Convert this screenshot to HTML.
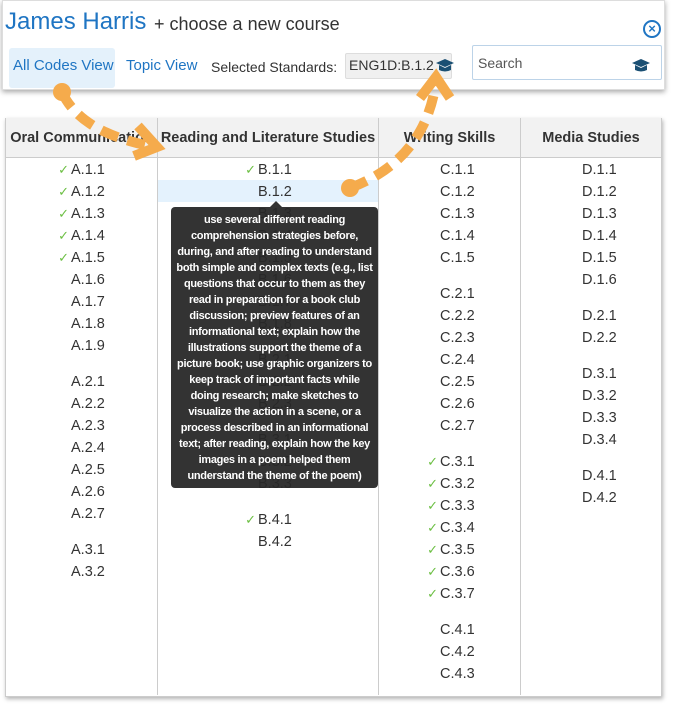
<!DOCTYPE html><html><head><meta charset="utf-8"><style>
body{margin:0;width:675px;height:706px;background:#fff;font-family:"Liberation Sans",sans-serif;position:relative;overflow:hidden;color:#333}
.a{position:absolute}
.it{position:absolute;font-size:14.5px;line-height:18px;color:#333;white-space:nowrap}
.ck{position:absolute;right:100%;margin-right:2px;color:#6cbf43;font-size:13px}
.th{position:absolute;top:118px;height:39px;line-height:40px;text-align:center;font-weight:bold;font-size:14.5px;color:#333;background:#f2f2f2;border-right:1px solid #ccc;border-bottom:1px solid #ccc;overflow:hidden;white-space:nowrap}
.vl{position:absolute;top:158px;height:537px;border-left:1px solid #ccc}
</style></head><body>
<div class="a" style="left:2px;top:0;width:661px;height:88px;border:1px solid #ddd;box-shadow:0 2px 5px rgba(0,0,0,.35);background:#fff"></div>
<div class="a" style="left:5px;top:8px;font-size:24px;color:#1f75c3">James Harris</div>
<div class="a" style="left:154px;top:14px;font-size:18px;color:#333">+ choose a new course</div>
<div class="a" style="left:643px;top:20px;width:14px;height:14px;border:2px solid #1f75c3;border-radius:50%;color:#1f75c3;font-size:13px;line-height:14px;text-align:center;font-weight:bold">×</div>
<div class="a" style="left:9px;top:48px;width:106px;height:40px;background:#e4f1fb;border-radius:3px"></div>
<div class="a" style="left:13px;top:57px;font-size:15px;color:#1f75c3">All Codes View</div>
<div class="a" style="left:126px;top:57px;font-size:15px;color:#1f75c3">Topic View</div>
<div class="a" style="left:211px;top:59px;font-size:14px;color:#333">Selected Standards:</div>
<div class="a" style="left:345px;top:53px;width:105px;height:24px;background:#f0f0f0;border:1px solid #ddd;border-radius:2px"></div>
<div class="a" style="left:349px;top:57px;font-size:14px;color:#333">ENG1D:B.1.2</div>
<div class="a" style="left:472px;top:45px;width:188px;height:33px;border:1px solid #bcd3e8;border-radius:2px;background:#fff"></div>
<div class="a" style="left:478px;top:55px;font-size:14px;color:#555">Search</div>
<svg class="a" style="left:0;top:0" width="675" height="706">
<g fill="#1a4f73"><path d="M632 63 l9 -4 9 4 -9 4z"/><path d="M635 65 v5 q6 3 12 0 v-5 l-6 3z"/>
<path d="M436 63 l9 -4 9 4 -9 4z"/><path d="M439 65 v5 q6 3 12 0 v-5 l-6 3z"/></g>
</svg>
<div class="a" style="left:5px;top:118px;width:655px;height:577px;border:1px solid #ccc;box-shadow:1px 2px 4px rgba(0,0,0,.3);background:#fff"></div>
<div class="th" style="left:6px;width:151px">Oral Communication</div>
<div class="th" style="left:158px;width:220px">Reading and Literature Studies</div>
<div class="th" style="left:379px;width:141px">Writing Skills</div>
<div class="th" style="left:521px;width:140px;border-right:none">Media Studies</div>
<div class="vl" style="left:157px"></div><div class="vl" style="left:378px"></div><div class="vl" style="left:520px"></div>
<div class="a" style="left:158px;top:180px;width:220px;height:22px;background:#e4f2fd"></div>
<div class="it" style="left:71px;top:161px"><span class="ck">✓</span>A.1.1</div>
<div class="it" style="left:71px;top:183px"><span class="ck">✓</span>A.1.2</div>
<div class="it" style="left:71px;top:205px"><span class="ck">✓</span>A.1.3</div>
<div class="it" style="left:71px;top:227px"><span class="ck">✓</span>A.1.4</div>
<div class="it" style="left:71px;top:249px"><span class="ck">✓</span>A.1.5</div>
<div class="it" style="left:71px;top:271px">A.1.6</div>
<div class="it" style="left:71px;top:293px">A.1.7</div>
<div class="it" style="left:71px;top:315px">A.1.8</div>
<div class="it" style="left:71px;top:337px">A.1.9</div>
<div class="it" style="left:71px;top:373px">A.2.1</div>
<div class="it" style="left:71px;top:395px">A.2.2</div>
<div class="it" style="left:71px;top:417px">A.2.3</div>
<div class="it" style="left:71px;top:439px">A.2.4</div>
<div class="it" style="left:71px;top:461px">A.2.5</div>
<div class="it" style="left:71px;top:483px">A.2.6</div>
<div class="it" style="left:71px;top:505px">A.2.7</div>
<div class="it" style="left:71px;top:541px">A.3.1</div>
<div class="it" style="left:71px;top:563px">A.3.2</div>
<div class="it" style="left:258px;top:161px"><span class="ck">✓</span>B.1.1</div>
<div class="it" style="left:258px;top:183px">B.1.2</div>
<div class="it" style="left:258px;top:205px">B.1.3</div>
<div class="it" style="left:258px;top:227px">B.1.4</div>
<div class="it" style="left:258px;top:249px">B.1.5</div>
<div class="it" style="left:258px;top:271px">B.1.6</div>
<div class="it" style="left:258px;top:293px">B.1.7</div>
<div class="it" style="left:258px;top:315px">B.1.8</div>
<div class="it" style="left:258px;top:351px">B.2.1</div>
<div class="it" style="left:258px;top:373px">B.2.2</div>
<div class="it" style="left:258px;top:395px">B.2.3</div>
<div class="it" style="left:258px;top:431px">B.3.1</div>
<div class="it" style="left:258px;top:453px">B.3.2</div>
<div class="it" style="left:258px;top:475px">B.3.3</div>
<div class="it" style="left:258px;top:511px"><span class="ck">✓</span>B.4.1</div>
<div class="it" style="left:258px;top:533px">B.4.2</div>
<div class="it" style="left:440px;top:161px">C.1.1</div>
<div class="it" style="left:440px;top:183px">C.1.2</div>
<div class="it" style="left:440px;top:205px">C.1.3</div>
<div class="it" style="left:440px;top:227px">C.1.4</div>
<div class="it" style="left:440px;top:249px">C.1.5</div>
<div class="it" style="left:440px;top:285px">C.2.1</div>
<div class="it" style="left:440px;top:307px">C.2.2</div>
<div class="it" style="left:440px;top:329px">C.2.3</div>
<div class="it" style="left:440px;top:351px">C.2.4</div>
<div class="it" style="left:440px;top:373px">C.2.5</div>
<div class="it" style="left:440px;top:395px">C.2.6</div>
<div class="it" style="left:440px;top:417px">C.2.7</div>
<div class="it" style="left:440px;top:453px"><span class="ck">✓</span>C.3.1</div>
<div class="it" style="left:440px;top:475px"><span class="ck">✓</span>C.3.2</div>
<div class="it" style="left:440px;top:497px"><span class="ck">✓</span>C.3.3</div>
<div class="it" style="left:440px;top:519px"><span class="ck">✓</span>C.3.4</div>
<div class="it" style="left:440px;top:541px"><span class="ck">✓</span>C.3.5</div>
<div class="it" style="left:440px;top:563px"><span class="ck">✓</span>C.3.6</div>
<div class="it" style="left:440px;top:585px"><span class="ck">✓</span>C.3.7</div>
<div class="it" style="left:440px;top:621px">C.4.1</div>
<div class="it" style="left:440px;top:643px">C.4.2</div>
<div class="it" style="left:440px;top:665px">C.4.3</div>
<div class="it" style="left:582px;top:161px">D.1.1</div>
<div class="it" style="left:582px;top:183px">D.1.2</div>
<div class="it" style="left:582px;top:205px">D.1.3</div>
<div class="it" style="left:582px;top:227px">D.1.4</div>
<div class="it" style="left:582px;top:249px">D.1.5</div>
<div class="it" style="left:582px;top:271px">D.1.6</div>
<div class="it" style="left:582px;top:307px">D.2.1</div>
<div class="it" style="left:582px;top:329px">D.2.2</div>
<div class="it" style="left:582px;top:365px">D.3.1</div>
<div class="it" style="left:582px;top:387px">D.3.2</div>
<div class="it" style="left:582px;top:409px">D.3.3</div>
<div class="it" style="left:582px;top:431px">D.3.4</div>
<div class="it" style="left:582px;top:467px">D.4.1</div>
<div class="it" style="left:582px;top:489px">D.4.2</div>
<div class="a" style="left:270px;top:201px;width:0;height:0;border-left:6px solid transparent;border-right:6px solid transparent;border-bottom:6px solid #333"></div>
<div class="a" style="left:171px;top:207px;width:207px;height:281px;background:rgba(40,40,40,.95);border-radius:4px;color:#fff;font-weight:bold;font-size:11px;line-height:16px;text-align:center;padding-top:5px;box-sizing:border-box;letter-spacing:-0.3px;white-space:nowrap">use several different reading<br>comprehension strategies before,<br>during, and after reading to understand<br>both simple and complex texts (e.g., list<br>questions that occur to them as they<br>read in preparation for a book club<br>discussion; preview features of an<br>informational text; explain how the<br>illustrations support the theme of a<br>picture book; use graphic organizers to<br>keep track of important facts while<br>doing research; make sketches to<br>visualize the action in a scene, or a<br>process described in an informational<br>text; after reading, explain how the key<br>images in a poem helped them<br>understand the theme of the poem)</div>
<svg class="a" style="left:0;top:0" width="675" height="706">
<g fill="none" stroke="#f5ab4c" stroke-width="10" stroke-linecap="butt">
<path d="M62 92 Q80 132 150 146" stroke-dasharray="18 10"/>
<path d="M138 126 L157 147 L134 156" stroke-linejoin="miter"/>
<path d="M350 188 Q425 160 436 82" stroke-dasharray="18 10"/>
<path d="M420 98 L436 77 L450 98"/>
</g>
<g fill="#f5ab4c"><circle cx="62" cy="92" r="9"/><circle cx="350" cy="188" r="9"/></g>
</svg>
</body></html>
